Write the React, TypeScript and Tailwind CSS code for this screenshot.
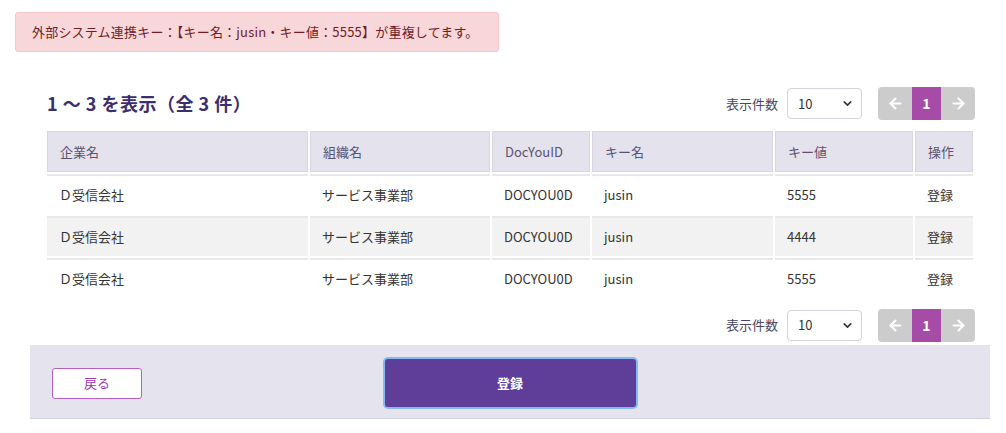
import React from "react";
import { ArrowLeft, ArrowRight, ChevronDown } from "lucide-react";

const font = { fontFamily: '"Noto Sans CJK JP", "Noto Sans", sans-serif' };

const rows = [
  { company: "Ｄ受信会社", org: "サービス事業部", id: "DOCYOU0D", key: "jusin", val: "5555" },
  { company: "Ｄ受信会社", org: "サービス事業部", id: "DOCYOU0D", key: "jusin", val: "4444" },
  { company: "Ｄ受信会社", org: "サービス事業部", id: "DOCYOU0D", key: "jusin", val: "5555" },
];

function Controls() {
  return (
    <div className="flex items-center mr-[-2px]">
      <span className="text-[13px] text-[#4a4560] mr-[9px]">表示件数</span>
      <div className="w-[75px] h-[31px] border border-[#cfd3da] rounded-[4px] bg-white flex items-center justify-between pl-[10px] pr-[7px] text-[13px] text-[#333]">
        <span>10</span>
        <ChevronDown size={13} strokeWidth={3} className="text-[#333]" />
      </div>
      <div className="ml-[16px] flex h-[33px] rounded-[4px] overflow-hidden">
        <div className="w-[34px] bg-[#cccccc] flex items-center justify-center">
          <ArrowLeft size={17} strokeWidth={3} className="text-white" />
        </div>
        <div className="w-[29px] bg-[#a64ca6] flex items-center justify-center text-white font-bold text-[14px]">1</div>
        <div className="w-[34px] bg-[#cccccc] flex items-center justify-center">
          <ArrowRight size={17} strokeWidth={3} className="text-white" />
        </div>
      </div>
    </div>
  );
}

export default function App() {
  const cols = "grid grid-cols-[261px_180px_98px_181px_138px_58px] gap-x-[2px]";
  const headers = ["企業名", "組織名", "DocYouID", "キー名", "キー値", "操作"];
  return (
    <div className="w-[1006px] h-[433px] bg-white pt-[12px]" style={font}>
      <div className="ml-[15px] w-[484px] h-[40px] flex items-center px-[16px] bg-[#f8d7da] border border-[#f5c6cb] rounded-[3px] text-[13px] tracking-[0.2px] text-[#721c24]">
        外部システム連携キー：【キー名：jusin・キー値：5555】が重複してます。
      </div>

      <div className="ml-[30px] w-[960px] mt-[35px] px-[17px]">
        <div className="flex items-center justify-between h-[33px]">
          <h2 className="text-[18px] font-bold tracking-[0.5px] text-[#3b2e6e]">1 ～ 3 を表示（全 3 件）</h2>
          <Controls />
        </div>

        <div className="mt-[11px]">
          <div className={cols}>
            {headers.map((h) => (
              <div key={h} className="h-[41px] bg-[#e4e2ec] border border-[#d8d6e0] flex items-center pl-[12px] text-[13px] text-[#5a5370]">
                {h}
              </div>
            ))}
          </div>
          {rows.map((r, i) => (
            <div key={i} className={`${cols} mt-[2px]`}>
              {[r.company, r.org, r.id, r.key, r.val, "登録"].map((c, j) => (
                <div
                  key={j}
                  className={`h-[40px] border-t-[2px] border-[#e8e8ec] flex items-center pl-[12px] text-[13px] text-[#333] ${i === 1 ? "bg-[#f2f2f2]" : "bg-white"}`}
                >
                  {c}
                </div>
              ))}
            </div>
          ))}
        </div>

        <div className="flex items-center justify-end h-[34px] mt-[10px]">
          <Controls />
        </div>
      </div>

      <div className="ml-[30px] w-[960px] mt-[3px] h-[74px] bg-[#e4e3ee] border-b border-[#cfd3dd] grid grid-cols-[1fr_auto_1fr] items-center">
        <div className="pl-[22px] pt-[3px]">
          <button className="w-[90px] h-[31px] bg-white border border-[#b760c4] rounded-[3px] text-[13px] text-[#a13ab0]">
            戻る
          </button>
        </div>
        <button className="w-[255px] h-[52px] bg-[#5f3e9a] border-[2px] border-[#86b8f3] rounded-[5px] text-[13px] font-bold text-white mt-[3px]">
          登録
        </button>
        <div />
      </div>
    </div>
  );
}
